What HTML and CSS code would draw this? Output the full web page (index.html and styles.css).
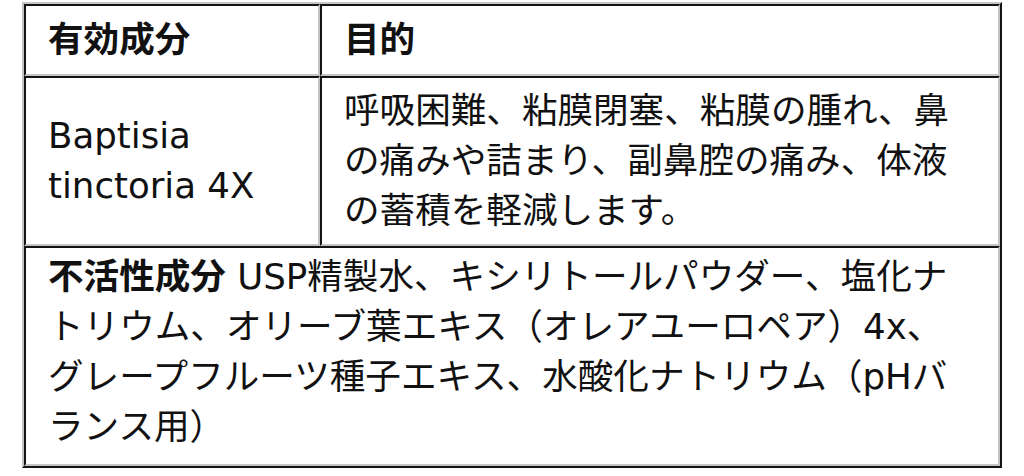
FILE: index.html
```html
<!DOCTYPE html>
<html lang="ja">
<head>
<meta charset="utf-8">
<title>有効成分</title>
<link rel="stylesheet" href="styles.css">
</head>
<body>
<table class="ingredients">
  <tr>
    <th class="col-name">有効成分</th>
    <th class="col-purpose">目的</th>
  </tr>
  <tr>
    <td class="col-name">Baptisia tinctoria 4X</td>
    <td class="col-purpose">呼吸困難、粘膜閉塞、粘膜の腫れ、鼻の痛みや詰まり、副鼻腔の痛み、体液の蓄積を軽減します。</td>
  </tr>
  <tr>
    <td class="inactive" colspan="2"><strong>不活性成分</strong> USP精製水、キシリトールパウダー、塩化ナトリウム、オリーブ葉エキス（オレアユーロペア）4x、グレープフルーツ種子エキス、水酸化ナトリウム（pHバランス用）</td>
  </tr>
</table>
</body>
</html>
```

FILE: styles.css
```css
html, body {
  margin: 0;
  padding: 0;
  background: #ffffff;
}

body {
  font-family: "DejaVu Sans", "Noto Sans CJK JP", sans-serif;
  color: #111111;
}

.ingredients {
  margin: 2px 0 0 22px;
  width: 980px;
  border-collapse: separate;
  border-spacing: 0;
  border: 2px solid;
  border-color: #c4c4c4 #141414 #141414 #c4c4c4;
}

.ingredients th,
.ingredients td {
  border: 2px solid;
  border-color: #141414 #c4c4c4 #c4c4c4 #141414;
  padding: 8px 26px 8px 22px;
  font-size: 35.6px;
  line-height: 50px;
  text-align: left;
  vertical-align: middle;
}

.ingredients th {
  font-weight: 700;
  padding-top: 9px;
  padding-bottom: 9px;
}

.ingredients .inactive {
  padding-top: 4px;
  padding-bottom: 12px;
}

.col-name {
  width: 244px;
}

.inactive strong {
  font-weight: 700;
}
```
